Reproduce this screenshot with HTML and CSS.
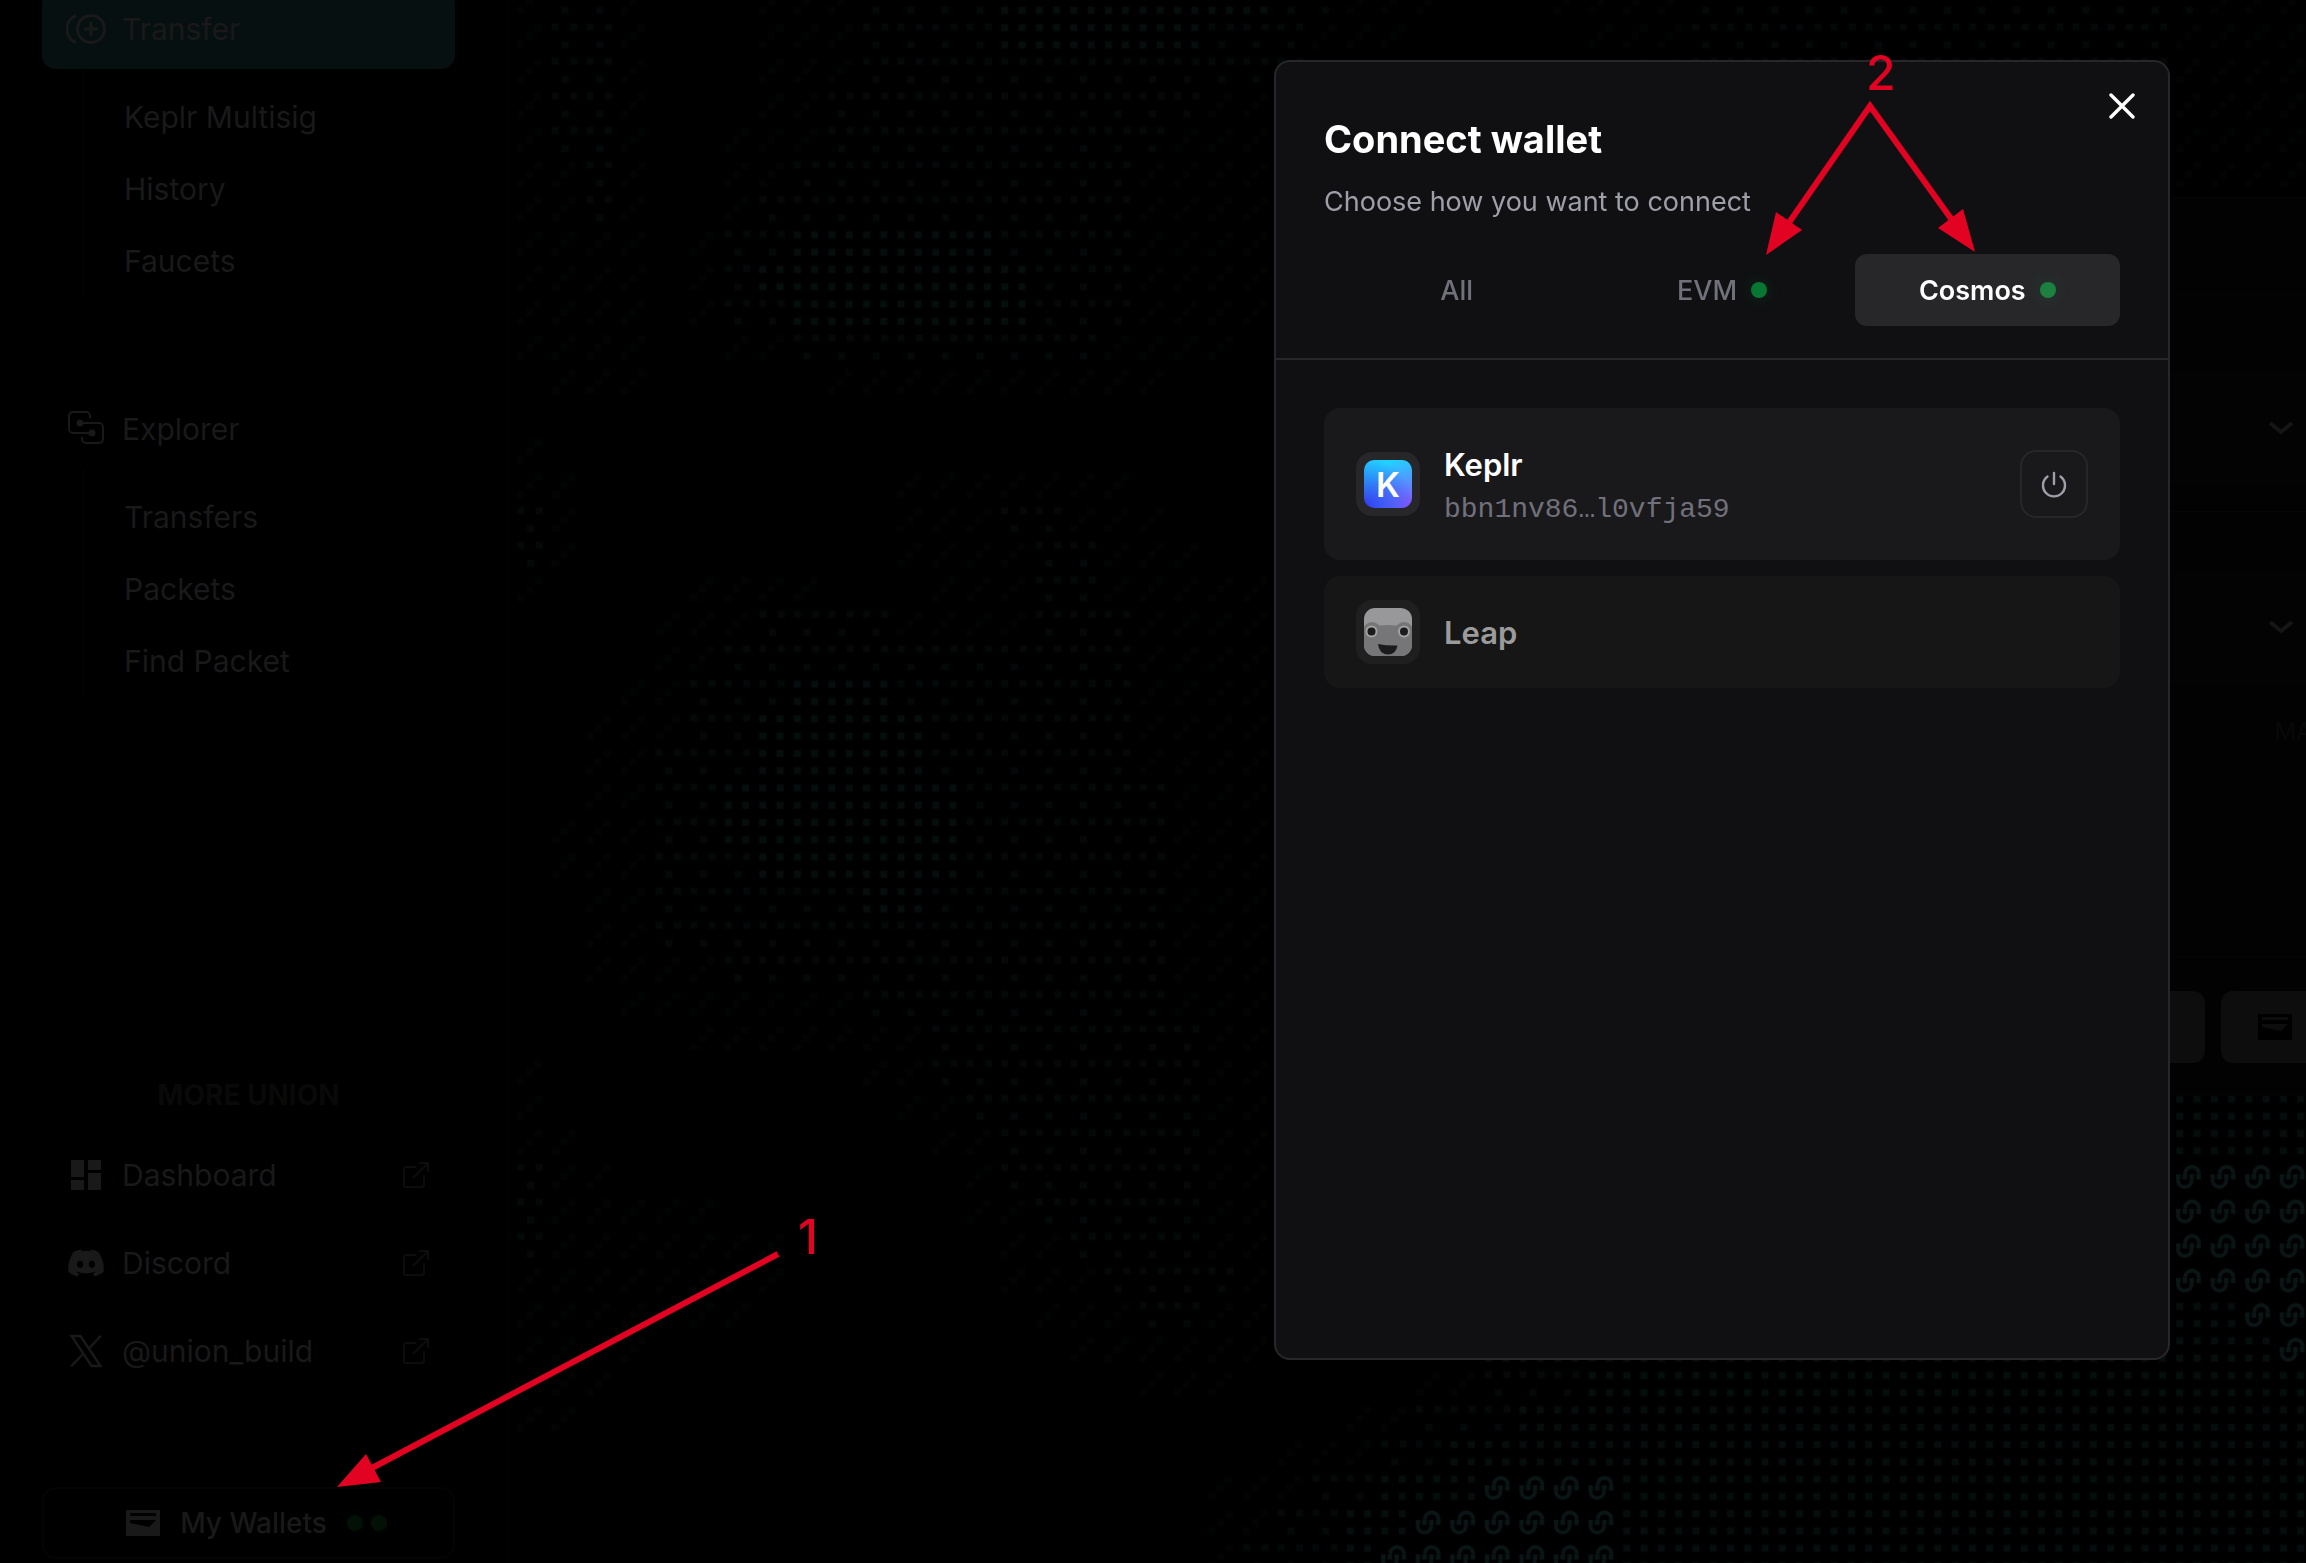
FILE: index.html
```html
<!DOCTYPE html>
<html lang="en">
<head>
    <meta charset="UTF-8">
    <meta name="viewport" content="width=device-width, initial-scale=1.0">
    <title>Union</title>
    <link rel="stylesheet" href="styles.css">
</head>
<body>
    <svg class="defs" aria-hidden="true">
        <symbol id="icon-wallet" viewBox="0 0 34 26">
            <path fill="currentColor" fill-rule="evenodd" d="M0 0H34V26H0zM4 3H30V6H4zM4 10H30L23 17L4 13z"/>
        </symbol>
        <symbol id="icon-external" viewBox="0 0 26 26">
            <path fill="none" stroke="currentColor" stroke-width="2" d="M13 5H3a2 2 0 0 0-2 2V23a2 2 0 0 0 2 2H19a2 2 0 0 0 2-2V13M16 1H25V10M25 1L10 16"/>
        </symbol>
        <symbol id="icon-chevron" viewBox="0 0 24 16">
            <path fill="none" stroke="currentColor" stroke-width="4" d="M1 3L12 12L23 3"/>
        </symbol>
    </svg>

    <div class="app">
        <aside class="sidebar">
            <nav>
                <a class="nav-link active" href="#transfer">
                    <svg class="nav-icon" viewBox="0 0 40 40" fill="none" stroke="currentColor" stroke-width="3">
                        <circle cx="25" cy="20" r="13.5"/>
                        <path d="M25 13V27M18 20H32M10 6.500A14.500 14.500 0 0 0 10 33.500"/>
                    </svg>
                    Transfer
                </a>
                <ul class="subnav">
                    <li><a href="#multisig">Keplr Multisig</a></li>
                    <li><a href="#history">History</a></li>
                    <li><a href="#faucets">Faucets</a></li>
                </ul>
                <a class="nav-link" href="#explorer">
                    <svg class="nav-icon" viewBox="0 0 40 40" fill="none" stroke="currentColor" stroke-width="2">
                        <path d="M24 9.500V7a4 4 0 0 0-4-4H7a4 4 0 0 0-4 4V20a4 4 0 0 0 4 4H26M14 14H33a4 4 0 0 1 4 4V30a4 4 0 0 1-4 4H20a4 4 0 0 1-4-4V28"/>
                        <circle cx="14" cy="14" r="3.500" fill="currentColor" stroke="none"/>
                        <circle cx="26" cy="24" r="3.500" fill="currentColor" stroke="none"/>
                    </svg>
                    Explorer
                </a>
                <ul class="subnav">
                    <li><a href="#transfers">Transfers</a></li>
                    <li><a href="#packets">Packets</a></li>
                    <li><a href="#find">Find Packet</a></li>
                </ul>
            </nav>

            <div class="more">
                <h2>MORE UNION</h2>
                <a class="more-link" href="#dashboard">
                    <svg class="nav-icon" viewBox="0 0 40 40" fill="currentColor">
                        <path d="M5 5H18V22H5zM22 5H35V15H22zM5 25H18V35H5zM22 18H35V35H22z"/>
                    </svg>
                    Dashboard
                    <svg class="external"><use href="#icon-external"/></svg>
                </a>
                <a class="more-link" href="#discord">
                    <svg class="nav-icon" viewBox="-1.500 -1.500 27 27" fill="currentColor">
                        <path d="M20.317 4.3698a19.7913 19.7913 0 00-4.8851-1.5152.0741.0741 0 00-.0785.0371c-.211.3753-.4447.8648-.6083 1.2495-1.8447-.2762-3.68-.2762-5.4868 0-.1636-.3933-.4058-.8742-.6177-1.2495a.077.077 0 00-.0785-.037 19.7363 19.7363 0 00-4.8852 1.515.0699.0699 0 00-.0321.0277C.5334 9.0458-.319 13.5799.0992 18.0578a.0824.0824 0 00.0312.0561c2.0528 1.5076 4.0413 2.4228 5.9929 3.0294a.0777.0777 0 00.0842-.0276c.4616-.6304.8731-1.2952 1.226-1.9942a.076.076 0 00-.0416-.1057c-.6528-.2476-1.2743-.5495-1.8722-.8923a.077.077 0 01-.0076-.1277c.1258-.0943.2517-.1923.3718-.2914a.0743.0743 0 01.0776-.0105c3.9278 1.7933 8.18 1.7933 12.0614 0a.0739.0739 0 01.0785.0095c.1202.099.246.1981.3728.2924a.077.077 0 01-.0066.1276 12.2986 12.2986 0 01-1.873.8914.0766.0766 0 00-.0407.1067c.3604.698.7719 1.3628 1.225 1.9932a.076.076 0 00.0842.0286c1.961-.6067 3.9495-1.5219 6.0023-3.0294a.077.077 0 00.0313-.0552c.5004-5.177-.8382-9.6739-3.5485-13.6604a.061.061 0 00-.0312-.0286zM8.02 15.3312c-1.1825 0-2.1569-1.0857-2.1569-2.419 0-1.3332.9555-2.4189 2.157-2.4189 1.2108 0 2.1757 1.0952 2.1568 2.419 0 1.3332-.9555 2.4189-2.1569 2.4189zm7.9748 0c-1.1825 0-2.1569-1.0857-2.1569-2.419 0-1.3332.9554-2.4189 2.1569-2.4189 1.2108 0 2.1757 1.0952 2.1568 2.419 0 1.3332-.946 2.4189-2.1568 2.4189Z"/>
                    </svg>
                    Discord
                    <svg class="external"><use href="#icon-external"/></svg>
                </a>
                <a class="more-link" href="#x">
                    <svg class="nav-icon" viewBox="0 0 40 40" fill="none" stroke="currentColor" stroke-width="2.400">
                        <path d="M5.500 5H14.500L34.500 35H25.500zM35 4.500L22.500 18M5 35.500L18 22"/>
                    </svg>
                    @union_build
                    <svg class="external"><use href="#icon-external"/></svg>
                </a>
            </div>

            <button class="wallets-btn" type="button">
                <svg class="wallet-icon"><use href="#icon-wallet"/></svg>
                My Wallets
                <span class="wallet-dots"><i class="dot"></i><i class="dot"></i></span>
            </button>
        </aside>

        <main class="main">
            <svg class="pattern" aria-hidden="true">
                <defs>
                    <pattern id="tile-a" width="1" height="1" patternUnits="userSpaceOnUse">
                        <path fill="#050d0d" d="M.15 .15h.2v.2h-.2zM.65 .15h.2v.2h-.2zM.15 .65h.2v.2h-.2zM.65 .65h.2v.2h-.2z"/>
                    </pattern>
                    <pattern id="tile-b" width="1" height="1" patternUnits="userSpaceOnUse">
                        <path fill="#040808" d="M.15 .13h.2v.2h-.2zM.68 .13h.2v.2h-.2zM.43 .65h.2v.2h-.2z"/>
                    </pattern>
                    <pattern id="tile-c" width="1" height="1" patternUnits="userSpaceOnUse">
                        <path fill="#020404" d="M.64 .16h.2v.2h-.2zM.4 .4h.2v.2h-.2zM.15 .65h.2v.2h-.2z"/>
                    </pattern>
                    <pattern id="tile-s" width="1" height="1" patternUnits="userSpaceOnUse">
                        <path fill="none" stroke="#0a1515" stroke-width=".11" d="M.41 .42V.37A.2 .2 0 0 1 .8 .37V.42M.2 .58V.64A.2 .2 0 0 0 .59 .64V.58"/>
                        <path fill="#0a1515" d="M.14 .43h.13v.15h-.13zM.33 .43h.13v.15h-.13zM.53 .43h.13v.15h-.13zM.73 .43h.13v.15h-.13z"/>
                    </pattern>
                </defs>
                <g id="tiles" transform="translate(-30.3 -15.6) scale(34.56)"></g>
            </svg>

            <section class="card">
                <div class="card-head"></div>
                <div class="card-section">
                    <button class="field" type="button" aria-label="Source"><svg class="chevron"><use href="#icon-chevron"/></svg></button>
                </div>
                <div class="card-section amount">
                    <button class="field" type="button" aria-label="Asset"><svg class="chevron"><use href="#icon-chevron"/></svg></button>
                    <button class="max" type="button">MAX</button>
                </div>
                <div class="card-foot">
                    <button class="submit" type="button" aria-label="Transfer"></button>
                    <button class="receiver" type="button" aria-label="Receiver"><svg class="wallet-icon"><use href="#icon-wallet"/></svg></button>
                </div>
            </section>
        </main>
    </div>

    <div class="overlay">
        <div class="modal" role="dialog" aria-labelledby="modal-title">
            <header class="modal-head">
                <button class="close" type="button" aria-label="Close">
                    <svg viewBox="0 0 26 26" fill="none" stroke="currentColor" stroke-width="3.400" stroke-linecap="round"><path d="M2 2L24 24M24 2L2 24"/></svg>
                </button>
                <h1 id="modal-title">Connect wallet</h1>
                <p>Choose how you want to connect</p>
                <div class="tabs">
                    <button class="tab" type="button">All</button>
                    <button class="tab" type="button">EVM <i class="dot"></i></button>
                    <button class="tab selected" type="button">Cosmos <i class="dot"></i></button>
                </div>
            </header>
            <div class="wallet-list">
                <div class="wallet connected">
                    <div class="wallet-logo"><span class="keplr">K</span></div>
                    <div class="wallet-info">
                        <div class="wallet-name">Keplr</div>
                        <div class="wallet-address">bbn1nv86…l0vfja59</div>
                    </div>
                    <button class="power" type="button" aria-label="Disconnect">
                        <svg viewBox="0 0 28 28" fill="none" stroke="currentColor" stroke-width="2.400" stroke-linecap="round"><path d="M14 3V14M7.500 6.500A11 11 0 1 0 20.500 6.500"/></svg>
                    </button>
                </div>
                <button class="wallet" type="button">
                    <span class="wallet-logo">
                        <svg class="leap" viewBox="0 0 48 48">
                            <clipPath id="leap-clip"><rect width="48" height="48" rx="11"/></clipPath>
                            <g clip-path="url(#leap-clip)">
                                <path fill="#98989a" d="M0 0H48V48H0z"/>
                                <path fill="#767678" d="M0 20Q24 14 48 20V42Q46 48 38 48H10Q2 48 0 42z"/>
                                <circle cx="8" cy="23" r="9" fill="#767678"/>
                                <circle cx="40" cy="23" r="9" fill="#767678"/>
                                <circle cx="7.500" cy="23.500" r="6" fill="#a2a2a2"/>
                                <circle cx="40" cy="23.500" r="6" fill="#a2a2a2"/>
                                <circle cx="7.500" cy="23.500" r="4" fill="#1b1b1b"/>
                                <circle cx="40" cy="23.500" r="4" fill="#1b1b1b"/>
                                <path fill="#1b1b1b" d="M14 36Q24 38 33.500 37.500Q32 46.500 24 46.500Q15 46 14 36z"/>
                            </g>
                        </svg>
                    </span>
                    <span class="wallet-name">Leap</span>
                </button>
            </div>
        </div>
    </div>

    <!-- step markers -->
    <svg class="markers" aria-hidden="true">
        <g stroke="#e20322" stroke-width="6" fill="none">
            <path d="M778 1254L370 1469"/>
            <path d="M1788 224L1870 106L1952 220"/>
        </g>
        <g fill="#e20322">
            <path d="M337 1487L366 1454L381 1482z"/>
            <path d="M1766 255L1776 212L1802 230z"/>
            <path d="M1975 252L1963 209L1938 228z"/>
            <text x="798" y="1254">1</text>
            <text x="1866" y="90">2</text>
        </g>
    </svg>

    <script src="pattern.js"></script>
</body>
</html>
```
FILE: styles.css
```css
* {
    box-sizing: border-box;
}

body {
    margin: 0;
    background: #000;
    color: #191919;
    font-family: 'Inter', 'Liberation Sans', sans-serif;
    font-size: 28px;
    overflow: hidden;
}

h1, h2, p, ul {
    margin: 0;
    padding: 0;
}

a {
    color: inherit;
    text-decoration: none;
}

button {
    font: inherit;
    color: inherit;
    background: none;
    border: none;
    padding: 0;
    cursor: pointer;
}

svg {
    display: block;
    flex-shrink: 0;
}

.defs {
    position: absolute;
    width: 0;
    height: 0;
}

.app {
    display: flex;
    height: 100vh;
}

/* sidebar */
.sidebar {
    width: 508px;
    flex-shrink: 0;
    display: flex;
    flex-direction: column;
    padding: 0 52px 4px 42px;
    border-right: 1px solid #010202;
    font-size: 30px;
}

nav {
    margin-top: -11px;
}

.nav-link {
    display: flex;
    align-items: center;
    gap: 16px;
    height: 80px;
    padding-left: 24px;
    border-radius: 14px;
}

.nav-link.active {
    background: #071011;
}

.nav-icon {
    width: 40px;
    height: 40px;
}

.subnav {
    list-style: none;
    margin: 0 0 92px 41px;
    padding: 12px 0 0 40px;
    border-left: 1px solid #050505;
}

.subnav a {
    display: block;
    line-height: 72px;
}

.more {
    margin-top: auto;
}

.more h2 {
    margin-bottom: 20px;
    font-size: 28px;
    line-height: 32px;
    font-weight: 700;
    text-align: center;
    color: #090909;
}

.more-link {
    display: flex;
    align-items: center;
    gap: 16px;
    height: 88px;
    padding: 0 26px 0 24px;
}

.external {
    width: 26px;
    height: 26px;
    margin-left: auto;
    color: #0d0d0d;
}

.wallets-btn {
    display: flex;
    align-items: center;
    justify-content: center;
    gap: 20px;
    height: 72px;
    margin-top: 92px;
    padding-left: 16px;
    border: 2px solid #040404;
    border-radius: 14px;
    font-size: 28px;
    font-weight: 500;
}

.wallet-icon {
    width: 34px;
    height: 26px;
}

.wallet-dots {
    display: flex;
    gap: 8px;
}

.dot {
    width: 16px;
    height: 16px;
    border-radius: 50%;
    background: #087733;
    box-shadow: 0 0 16px rgba(0, 166, 62, 0.2);
}

.wallet-dots .dot {
    background: #021006;
    box-shadow: 0 0 8px #020a04;
}

/* page behind the dialog */
.main {
    position: relative;
    flex: 1;
    overflow: hidden;
}

.pattern {
    position: absolute;
    top: 0;
    left: 0;
    width: 100%;
    height: 100%;
}

.card {
    position: relative;
    width: 860px;
    margin: 197px -80px 0 auto;
    background: #020202;
    border: 1px solid #040404;
}

.card-head {
    height: 98px;
    border-bottom: 1px solid #040404;
}

.card-section {
    padding: 75px 56px 26px;
    border-bottom: 1px solid #050505;
}

.card-section.amount {
    padding: 58px 56px 208px;
}

.field {
    display: flex;
    align-items: center;
    justify-content: flex-end;
    width: 100%;
    height: 114px;
    padding-right: 36px;
    background: #030303;
    color: #151515;
}

.chevron {
    width: 24px;
    height: 16px;
}

.max {
    display: block;
    margin: 32px 0 0 auto;
    font-size: 24px;
    line-height: 32px;
    color: #080808;
}

.card-foot {
    display: flex;
    gap: 16px;
    padding: 34px 56px 32px;
}

.submit, .receiver {
    height: 72px;
    border-radius: 12px;
    background: #0d0d0d;
}

.submit {
    flex: 1;
}

.receiver {
    width: 108px;
    display: flex;
    align-items: center;
    justify-content: center;
    color: #000;
}

/* dialog */
.overlay {
    position: fixed;
    inset: 0;
    display: flex;
    justify-content: flex-end;
    padding: 60px 136px 203px;
}

.modal {
    width: 896px;
    background: #101012;
    border: 2px solid #27272a;
    border-radius: 16px;
}

.modal-head {
    position: relative;
    padding: 52px 48px 32px;
    border-bottom: 2px solid #27272a;
}

.modal-head h1 {
    font-size: 38px;
    line-height: 50px;
    font-weight: 700;
    color: #fff;
}

.modal-head p {
    margin-top: 18px;
    font-size: 27px;
    line-height: 40px;
    color: #9f9fa9;
}

.close {
    position: absolute;
    top: 31px;
    right: 33px;
    color: #fff;
}

.close svg {
    width: 26px;
    height: 26px;
}

.tabs {
    display: grid;
    grid-template-columns: repeat(3, 1fr);
    margin-top: 32px;
}

.tab {
    display: flex;
    align-items: center;
    justify-content: center;
    gap: 14px;
    height: 72px;
    border-radius: 12px;
    font-size: 27px;
    font-weight: 500;
    color: #71717b;
}

.tab.selected {
    background: #27272a;
    color: #fff;
    font-weight: 600;
}

.tab.selected .dot {
    background: #1c8040;
}

.wallet-list {
    display: flex;
    flex-direction: column;
    gap: 16px;
    padding: 48px;
}

.wallet {
    display: flex;
    align-items: center;
    gap: 24px;
    width: 100%;
    padding: 24px 32px;
    border-radius: 16px;
    background: #161616;
    color: #9b9b9b;
    text-align: left;
}

.wallet.connected {
    padding: 32px;
    background: #19191b;
    color: #fff;
}

.wallet-logo {
    width: 64px;
    height: 64px;
    padding: 8px;
    border-radius: 16px;
    background: #1f1f1f;
}

.connected .wallet-logo {
    background: #27272a;
}

.keplr {
    display: block;
    height: 48px;
    border-radius: 10px;
    background:
        radial-gradient(circle at 0 100%, #3434ee, transparent 75%),
        radial-gradient(circle at 100% 100%, #8f4dff, transparent 75%),
        #22d1ff;
    color: #fff;
    font-size: 34px;
    line-height: 50px;
    font-weight: 600;
    text-align: center;
}

.leap {
    width: 48px;
    height: 48px;
}

.wallet-info {
    flex: 1;
}

.wallet-name {
    padding-top: 2px;
    font-size: 31px;
    line-height: 46px;
    font-weight: 600;
}

.wallet-address {
    font-family: 'Liberation Mono', monospace;
    line-height: 40px;
    padding-top: 2px;
    color: #71717b;
}

.connected .wallet-info {
    margin-bottom: -2px;
}

.power {
    display: flex;
    align-items: center;
    justify-content: center;
    width: 68px;
    height: 68px;
    border: 2px solid #27272a;
    border-radius: 16px;
    color: #9f9fa9;
}

.power svg {
    width: 28px;
    height: 28px;
}

.markers {
    position: fixed;
    inset: 0;
    width: 100%;
    height: 100%;
    font-size: 48px;
    font-weight: 500;
    pointer-events: none;
}
```
FILE: pattern.js
```javascript
// One entry per tile row: tile type followed by its first and last column
const rows = [
    "c1 b2-3 c4 c8-10 b11-14 a15-22 b23-24 c25-27 c31-34 b35-49 c50-52",
    "c1 b2-3 c4 c8-10 b11-14 a15-20 b21-23 c24-26 c32-34 b35-48 c49-52",
    "c1 b2-3 c4 c8-10 b11-23 c33-34 b35-48 c49-52",
    "c1 b2-3 c4 c8-9 b10-20 c21-22 c49-52",
    "c1 b2-3 c4 c7-9 b10-19 c20-22 c49-52",
    "c1-2 b3 c4 c7-8 b9-18 c19-22 c49-52",
    "c1-2 b3 c4 c7 b8-18 c19-22",
    "c1-4 c6 b7-8 a9-14 b15-18 c19-22",
    "c1-4 c6 b7 a8-15 b16-18 c19-22",
    "c1-4 c6 b7-8 a9-15 b16-18 c19-22",
    "c1-4 c7-8 b9-17 c18-21",
    "c2-4 c10-19",
    "",
    "c1",
    "b0 c1-2 c12-18",
    "b0-1 c2 c12-14 b15-16 c17-19",
    "b0-1 c2 c12-15 b16-17 c18-20",
    "b0 c1 c6-9 c13-15 b16-17 c18-22",
    "c5-7 b8-11 c12-15 b16-18 c19-22",
    "c5-6 b7-18 c19-22",
    "c4-5 b6-8 a9-11 b12-18 c19-22",
    "c3-5 b6-7 a8-12 b13-18 c19-22",
    "c3-4 b5-7 a8-12 b13-18 c19-22",
    "c3-4 b5-6 a7-13 b14-19 c20-22",
    "c2-4 b5-6 a7-13 b14-19 c20-22",
    "c2-4 b5-7 a8-13 b14-19 c20-22",
    "c3-4 b5-10 a11-12 b13-19 c20-22",
    "c3-4 b5-19 c20-22",
    "c3-6 b7-19 c20-22",
    "c4-10 b11-19 c20-22",
    "c6-12 b13-20 c21-22",
    "c1 c11-12 b13-20 c21-22",
    "c1 c12-13 b14-20 c21-22 a49-52",
    "b0 c1-2 c13-14 b15-20 c21-22 a49-52",
    "b0-1 c2-3 c14 b15-20 c21-22 s49-52",
    "b0-1 c2-6 c14-15 b16-20 c21-22 s49-52",
    "b0-1 c2-8 c15-16 b17-20 c21-22 s49-52",
    "b0 c1-8 c15-17 b18-21 c22 s49-52",
    "b0 c1-7 c16-18 b19-20 c21-22 a49-50 s51-52",
    "b0 c1-4 c17-22 a29-51 s52",
    "b0 c1-3 c19-21 c27-28 b29-31 a32-52",
    "c1-2 c25-26 b27-29 a30-52",
    "c23-25 b26-27 a28-52",
    "c21-23 b24-25 a26-28 s29-32 a33-52",
    "c21-22 b23-24 a25-26 s27-32 a33-52",
    "c21 b22-24 a25 s26-32 a33-52"
];

const tiles = document.getElementById("tiles");

rows.forEach((row, y) => {
    row.split(" ").filter(Boolean).forEach(run => {
        const [first, last = first] = run.slice(1).split("-").map(Number);
        const rect = document.createElementNS("http://www.w3.org/2000/svg", "rect");
        rect.setAttribute("x", first);
        rect.setAttribute("y", y);
        rect.setAttribute("width", last - first + 1);
        rect.setAttribute("height", 1);
        rect.setAttribute("fill", `url(#tile-${run[0]})`);
        tiles.appendChild(rect);
    });
});
```
